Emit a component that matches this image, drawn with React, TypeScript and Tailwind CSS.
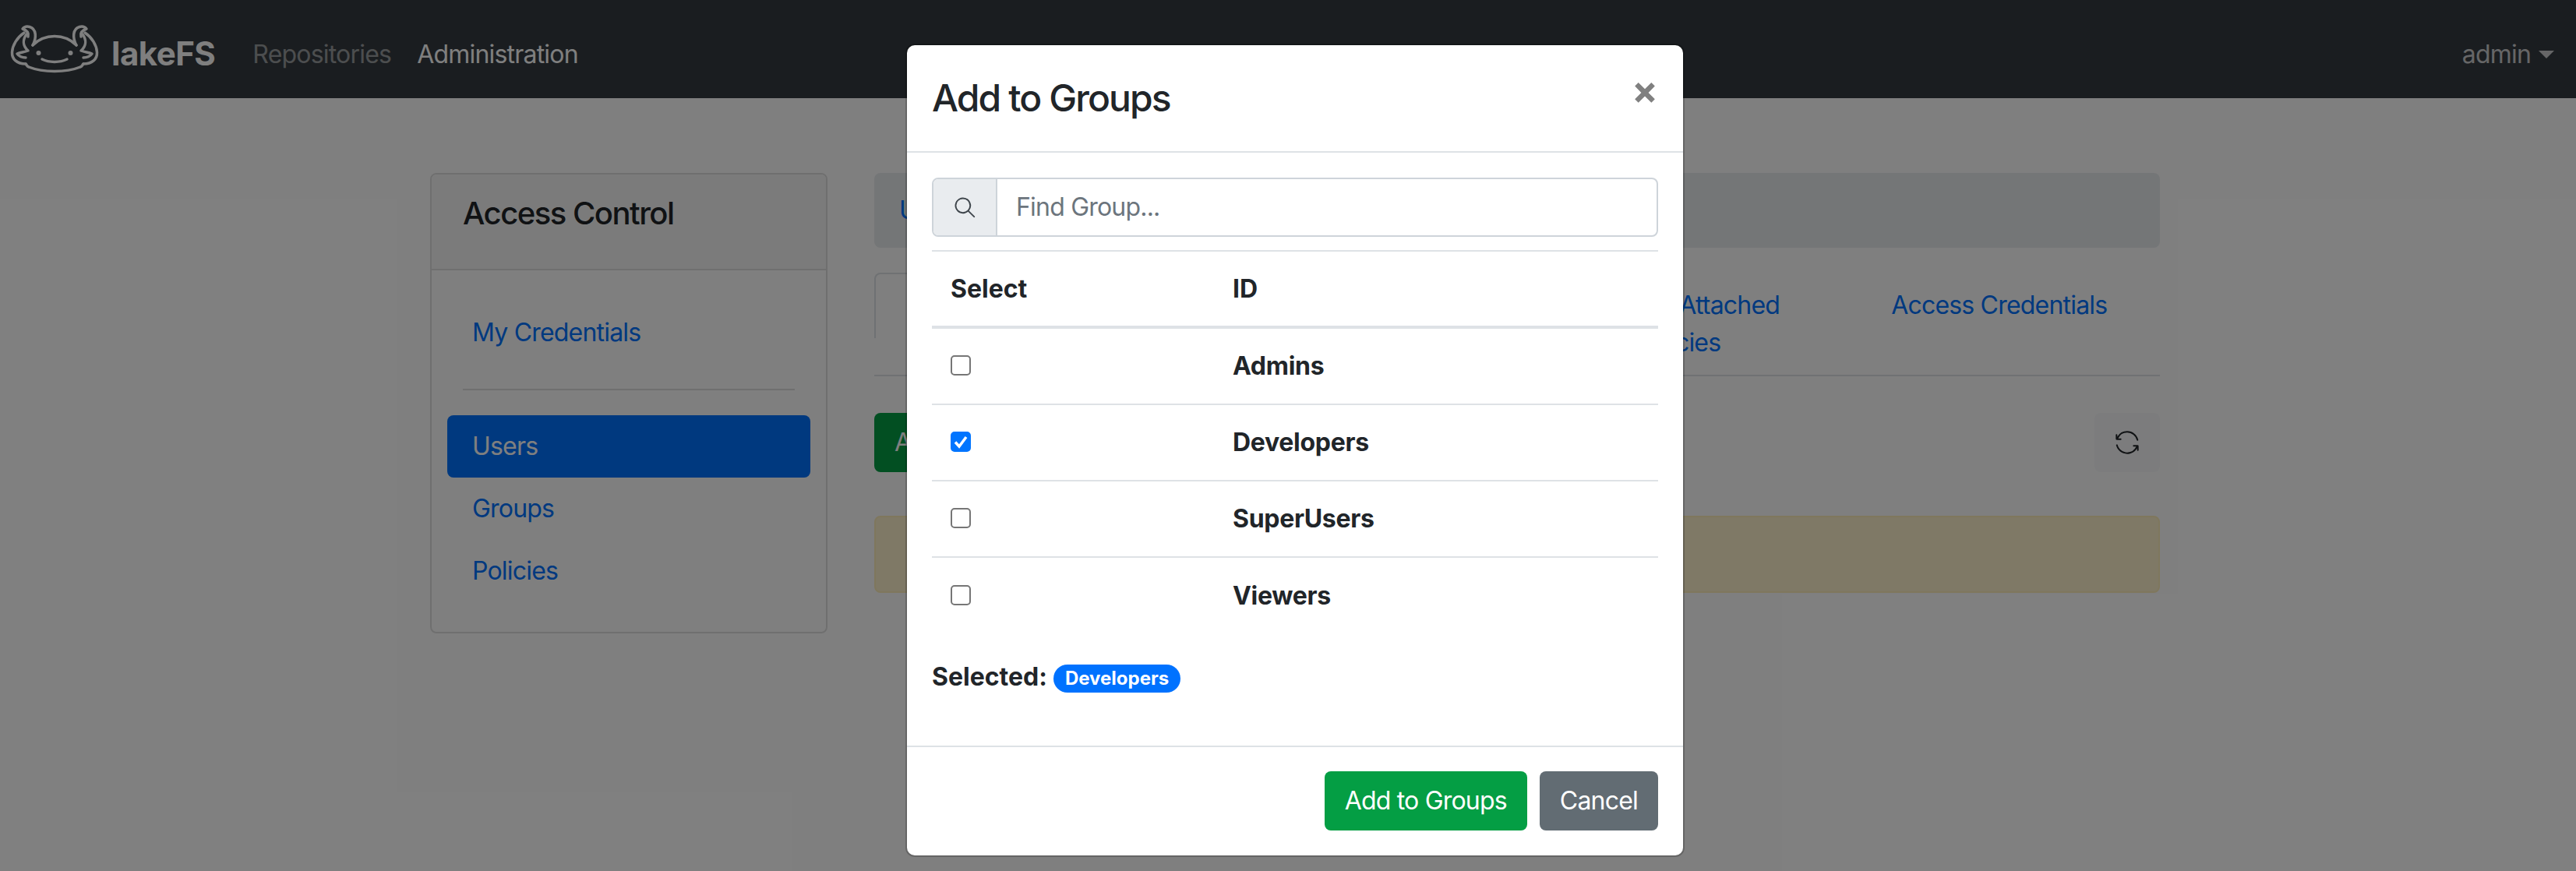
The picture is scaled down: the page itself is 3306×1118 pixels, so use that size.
import { GoSearch, GoSync } from 'react-icons/go';

const font = "font-['Inter','Liberation_Sans',sans-serif]";

function LogoSide() {
  return (
    <>
      {/* horn */}
      <path d="M37 35C42 26 42 14 33 11.500C29 10.500 26 11.500 24 14C30 16 32 20 31 24" />
      {/* gill, outer edge */}
      <path d="M26 19C17 25 11 35 10.500 44C10 53 17 59 28 59" />
      {/* gill, inner curl */}
      <path d="M29 21C24 28 24 36 31 42C26 44 21 44 17 46C20 50 25 51 28 51" />
    </>
  );
}

function Logo() {
  return (
    <svg width="130" height="80" viewBox="0 0 130 80" fill="none" stroke="currentColor" strokeWidth="3.500" strokeLinecap="round" strokeLinejoin="round" className="shrink-0">
      <path d="M37 35C45 27 55 23.500 65 23.500C75 23.500 85 27 93 35" />
      <path d="M28 59C30 61 29 62 32 63C42 67 54 68.500 65 68.500C76 68.500 88 67 98 63C101 62 100 61 102 59" />
      <LogoSide />
      <g transform="translate(130 0) scale(-1 1)">
        <LogoSide />
      </g>
      <circle cx="44.500" cy="45" r="3" fill="currentColor" stroke="none" />
      <circle cx="85.500" cy="45" r="3" fill="currentColor" stroke="none" />
      <path d="M49 53C58 57.500 72 57.500 81 53" />
    </svg>
  );
}

function Navbar() {
  return (
    <div className="flex h-[126px] items-center bg-[#343a40] pl-[5px] pr-[28px]">
      <div className="flex items-center text-white">
        <Logo />
        <span className="mt-[12px] ml-[8px] text-[42px] leading-none font-bold tracking-[-0.5px]">lakeFS</span>
      </div>
      <a className="mt-[14px] ml-[48px] text-[32px] text-white/50">Repositories</a>
      <a className="mt-[14px] ml-[33px] text-[32px] text-white">Administration</a>
      <div className="mt-[14px] ml-auto flex items-center text-[32px] text-white/75">
        admin
        <span className="ml-[10px] h-0 w-0 border-x-[10px] border-t-[10px] border-x-transparent border-t-white/75" />
      </div>
    </div>
  );
}

function Sidebar() {
  return (
    <div className="flex h-[591px] w-[510px] shrink-0 flex-col rounded-[8px] border-2 border-[#dfdfdf]">
      <div className="h-[123px] rounded-t-[6px] border-b-2 border-[#dfdfdf] bg-[#f7f7f7] pt-[26px] pl-[40px] text-[40px] leading-[48px] font-medium tracking-[-1.5px] text-[#212529]">
        Access Control
      </div>
      <div className="flex flex-col px-[20px] pt-[40px]">
        <a className="h-[80px] px-[32px] py-[16px] text-[32px] leading-[48px] text-[#0072ff]">My Credentials</a>
        <div className="mx-[20px] mt-[32px] mb-[32px] h-[2px] bg-[#dfdfdf]" />
        <a className="h-[80px] rounded-[8px] bg-[#0072ff] px-[32px] py-[16px] text-[32px] leading-[48px] text-white">Users</a>
        <a className="h-[80px] px-[32px] py-[16px] text-[32px] leading-[48px] text-[#0072ff]">Groups</a>
        <a className="h-[80px] px-[32px] py-[16px] text-[32px] leading-[48px] text-[#0072ff]">Policies</a>
      </div>
    </div>
  );
}

function MainPanel() {
  return (
    <div className="flex w-[1650px] flex-col">
      <div className="h-[96px] rounded-[8px] bg-[#e9ecef] px-[32px] py-[24px] text-[32px] leading-[48px] text-[#0072ff]">Users</div>
      {/* the first two tab labels sit behind the modal */}
      <div className="mt-[32px] grid h-[133px] grid-cols-4 items-start border-b-2 border-[#dee2e6] text-center text-[32px] leading-[48px] text-[#0072ff]">
        <div className="h-[84px] rounded-t-[8px] border-x-2 border-t-2 border-[#dee2e6]" />
        <div />
        <div className="px-[34px] py-[18px]">Effective Attached Policies</div>
        <div className="px-[34px] py-[18px]">Access Credentials</div>
      </div>
      <div className="mt-[47px] flex items-center justify-between">
        <button className="h-[76px] rounded-[8px] bg-[#049e44] px-[26px] text-[32px] text-white">Add to Groups</button>
        <button className="flex h-[76px] w-[84px] items-center justify-center rounded-[8px] bg-[#f8f9fa] text-[#212529]">
          <GoSync size={32} />
        </button>
      </div>
      <div className="mt-[56px] h-[99px] rounded-[8px] border-2 border-[#ffeeba] bg-[#fff3cd]" />
    </div>
  );
}

function GroupRow({ name, checked, last }: { name: string; checked?: boolean; last?: boolean }) {
  return (
    <div className={`flex h-[98px] items-center ${last ? '' : 'border-b-2 border-[#dee2e6]'}`}>
      <div className="flex w-[386px] items-center pl-[24px]">
        <span className="relative flex h-[26px] w-[26px] -translate-y-[1px]">
          <input
            type="checkbox"
            readOnly
            checked={!!checked}
            className="m-0 h-[26px] w-[26px] appearance-none rounded-[5px] border-2 border-[#767676] bg-white checked:border-[#0075ff] checked:bg-[#0075ff]"
          />
          {checked && (
            <svg viewBox="0 0 26 26" fill="none" stroke="white" strokeWidth="3.500" className="absolute inset-0">
              <path d="M6 13.500L11 19L20 7" />
            </svg>
          )}
        </span>
      </div>
      <div className="text-[32px] font-bold tracking-[-0.3px] text-[#212529]">{name}</div>
    </div>
  );
}

function AddToGroupsModal() {
  return (
    <div className="absolute top-[58px] left-[1164px] flex h-[1040px] w-[996px] flex-col rounded-[10px] bg-white shadow-[0_0_0_2px_rgba(0,0,0,0.2)]">
      <div className="relative flex h-[138px] shrink-0 items-center border-b-2 border-[#dee2e6] pl-[32px] text-[48px] font-medium tracking-[-1.9px] text-[#212529]">
        Add to Groups
        <span className="absolute top-[21px] right-[32px] text-[50px] leading-[72px] font-bold tracking-normal text-[#808080]">×</span>
      </div>
      <div className="flex flex-1 flex-col px-[32px] pt-[32px]">
        <div className="flex h-[76px] shrink-0 rounded-[8px] border-2 border-[#ced4da]">
          <div className="flex w-[82px] items-center justify-center rounded-l-[6px] border-r-2 border-[#ced4da] bg-[#e9ecef] text-[#3f464c]">
            <GoSearch size={30} />
          </div>
          <input readOnly placeholder="Find Group..." className="flex-1 rounded-r-[6px] px-[24px] text-[32px] outline-none placeholder:text-[#6c757d]" />
        </div>
        <div className="mt-[17px] flex h-[101px] shrink-0 items-center border-t-2 border-b-4 border-[#dee2e6] text-[32px] font-bold tracking-normal text-[#212529]">
          <div className="w-[386px] pl-[24px]">Select</div>
          <div>ID</div>
        </div>
        <GroupRow name="Admins" />
        <GroupRow name="Developers" checked />
        <GroupRow name="SuperUsers" />
        <GroupRow name="Viewers" last />
        <div className="mt-[31px] flex items-center text-[32px] font-bold tracking-normal text-[#212529]">
          Selected:
          <span className="ml-[8px] flex h-[36px] translate-y-[2px] items-center rounded-full bg-[#0072ff] px-[15px] text-[24px] font-bold text-white">Developers</span>
        </div>
      </div>
      <div className="flex h-[141px] shrink-0 items-start justify-end gap-[16px] border-t-2 border-[#dee2e6] px-[32px] pt-[31px]">
        <button className="h-[76px] rounded-[8px] bg-[#049e44] px-[26px] text-[32px] text-white">Add to Groups</button>
        <button className="h-[76px] rounded-[8px] bg-[#626c73] px-[26px] text-[32px] text-white">Cancel</button>
      </div>
    </div>
  );
}

export default function App() {
  return (
    <div className={`relative h-[1118px] w-[3306px] overflow-hidden bg-white tracking-[-0.8px] ${font}`}>
      <Navbar />
      <div className="mt-[96px] ml-[552px] flex gap-[60px]">
        <Sidebar />
        <MainPanel />
      </div>
      {/* backdrop */}
      <div className="absolute inset-0 bg-black/50" />
      <AddToGroupsModal />
    </div>
  );
}
